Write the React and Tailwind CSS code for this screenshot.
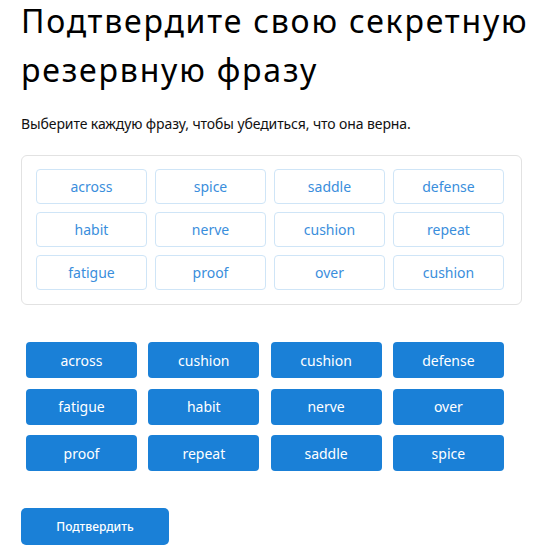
const panelWords = [
  "across", "spice", "saddle", "defense",
  "habit", "nerve", "cushion", "repeat",
  "fatigue", "proof", "over", "cushion",
]

const pickedWords = [
  "across", "cushion", "cushion", "defense",
  "fatigue", "habit", "nerve", "over",
  "proof", "repeat", "saddle", "spice",
]

export default function App() {
  return (
    <div className="min-h-[550px] bg-white px-[21px] font-['Noto_Sans',sans-serif] text-black">
      <h1 className="-mt-[4px] whitespace-nowrap text-[32px] leading-[49px] font-normal tracking-[1.8px]">
        Подтвердите свою секретную
        <br />
        резервную фразу
      </h1>
      <p className="mt-[20px] text-[14px] leading-[20px] tracking-[-0.1px] text-[#111]">
        Выберите каждую фразу, чтобы убедиться, что она верна.
      </p>

      <div className="mt-[21px] w-[501px] rounded-[6px] border border-[#e2e2e2] pt-[13px] pb-[14px] pl-[14px]">
        <div className="grid grid-cols-[repeat(4,111px)] gap-x-[8px] gap-y-[8px]">
          {panelWords.map((w, i) => (
            <button
              key={i}
              className="flex h-[35px] items-center justify-center rounded-[4px] border border-[#cfe5f7] bg-white text-[14px] text-[#3a8edc]"
            >
              {w}
            </button>
          ))}
        </div>
      </div>

      <div className="mt-[37px] ml-[5px] grid grid-cols-[repeat(4,111px)] gap-x-[11.3px] gap-y-[10.5px]">
        {pickedWords.map((w, i) => (
          <button
            key={i}
            className="flex h-[36px] items-center justify-center rounded-[4px] bg-[#1a80d7] text-[14px] text-white"
          >
            {w}
          </button>
        ))}
      </div>

      <button className="mt-[37px] flex h-[37px] w-[148px] items-center justify-center rounded-[5px] bg-[#1a80d7] text-[12px] font-medium text-white">
        Подтвердить
      </button>
    </div>
  )
}
